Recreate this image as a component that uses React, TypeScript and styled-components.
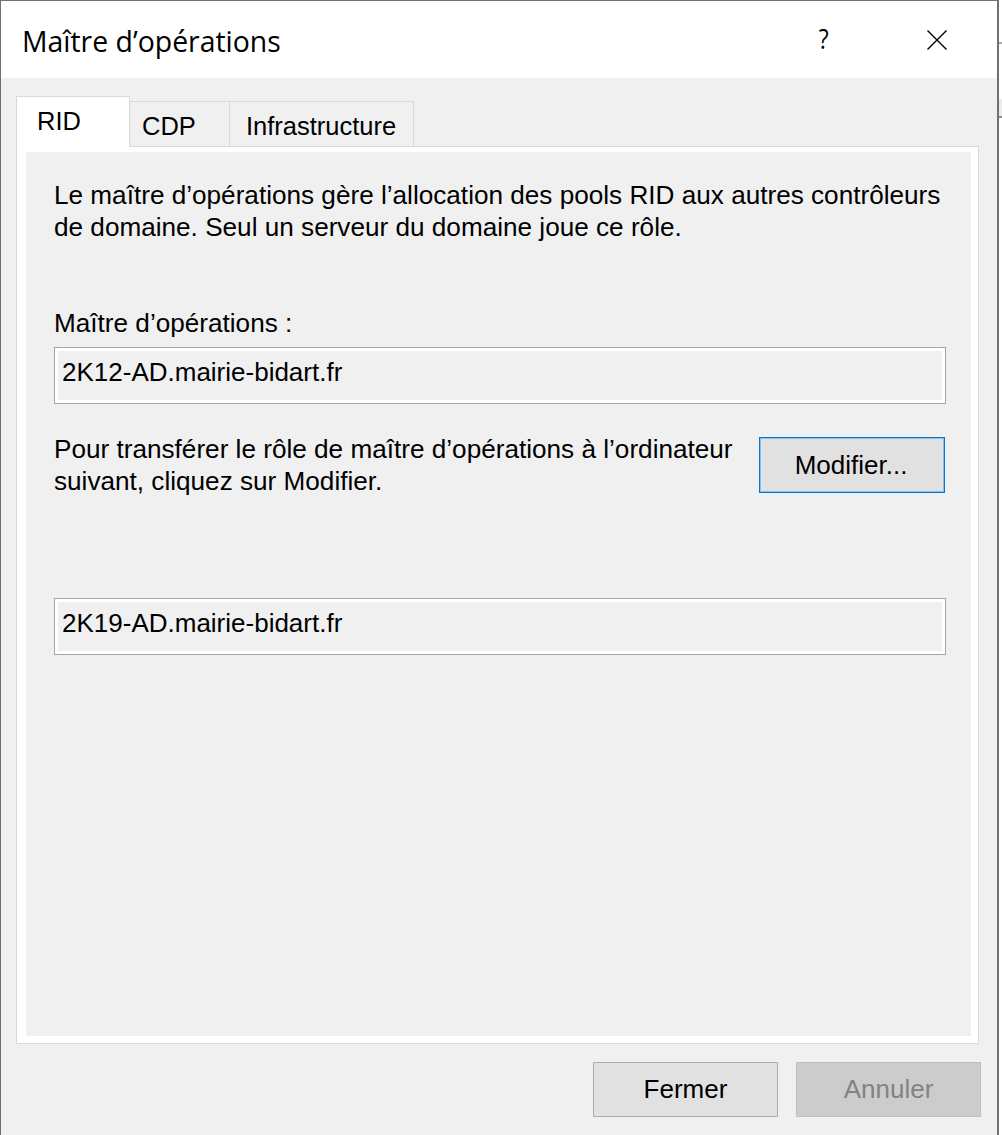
import React from "react";
import styled, { createGlobalStyle } from "styled-components";

const GlobalStyle = createGlobalStyle`
  html, body {
    margin: 0;
    padding: 0;
    background: #ffffff;
  }
  body {
    font-family: "Liberation Sans", Arial, sans-serif;
    color: #000;
  }
`;

type TabItem = { label: string; width: number; pad: number; active?: boolean };

const tabs: TabItem[] = [
  { label: "RID", width: 114, pad: 20, active: true },
  { label: "CDP", width: 100, pad: 12 },
  { label: "Infrastructure", width: 184, pad: 16 },
];

const App: React.FC = () => {
  return (
    <Desktop>
      <GlobalStyle />
      <Window>
        <TitleBar>
          <Title>Maître d’opérations</Title>
          <CaptionButton aria-label="Aide">
            <HelpGlyph>?</HelpGlyph>
          </CaptionButton>
          <CaptionButton aria-label="Fermer">
            <svg width="22" height="22" viewBox="0 0 22 22">
              <path d="M1.5 1.5 L20.5 20.5 M20.5 1.5 L1.5 20.5" stroke="#000" strokeWidth="1.4" fill="none" />
            </svg>
          </CaptionButton>
        </TitleBar>

        <Body>
          <TabStrip>
            {tabs.map((t) => (
              <Tab key={t.label} $active={!!t.active} $width={t.width} $pad={t.pad}>
                {t.label}
              </Tab>
            ))}
          </TabStrip>

          <Panel>
            <Page>
              <Text>
                Le maître d’opérations gère l’allocation des pools RID aux autres contrôleurs
                <br />
                de domaine. Seul un serveur du domaine joue ce rôle.
              </Text>

              <Label>Maître d’opérations :</Label>
              <ReadOnlyBox $top={8}>2K12-AD.mairie-bidart.fr</ReadOnlyBox>

              <TransferRow>
                <Text>
                  Pour transférer le rôle de maître d’opérations à l’ordinateur
                  <br />
                  suivant, cliquez sur Modifier.
                </Text>
                <ModifyButton>Modifier...</ModifyButton>
              </TransferRow>

              <ReadOnlyBox $top={101}>2K19-AD.mairie-bidart.fr</ReadOnlyBox>
            </Page>
          </Panel>

          <Footer>
            <DialogButton>Fermer</DialogButton>
            <DialogButton $disabled>Annuler</DialogButton>
          </Footer>
        </Body>
      </Window>

      <DesktopEdge>
        <EdgeGap $h={42} />
        <EdgeLine />
        <EdgeGap $h={55} />
        <EdgeBand />
      </DesktopEdge>
    </Desktop>
  );
};

export default App;

// styles

const Desktop = styled.div`
  display: flex;
  width: 1002px;
  height: 1135px;
  overflow: hidden;
  background: #ffffff;
`;

const Window = styled.div`
  flex: 0 0 999px;
  box-sizing: border-box;
  height: 1160px;
  display: flex;
  flex-direction: column;
  border-top: 1px solid #707070;
  border-left: 1px solid #707070;
  border-right: 2px solid #707070;
  background: #f0f0f0;
`;

const TitleBar = styled.div`
  height: 77px;
  display: flex;
  align-items: center;
  background: #ffffff;
  padding-right: 3px;
`;

const Title = styled.div`
  flex: 1;
  padding-left: 21px;
  padding-top: 3px;
  font-family: "Open Sans", "Noto Sans", sans-serif;
  font-size: 28.4px;
  color: #000;
  white-space: nowrap;
`;

const CaptionButton = styled.div`
  width: 114px;
  height: 77px;
  display: flex;
  align-items: center;
  justify-content: center;
`;

const HelpGlyph = styled.span`
  font-family: "Open Sans", "Noto Sans", sans-serif;
  font-size: 27px;
  line-height: 1;
  margin-top: -2px;
  margin-left: 2px;
  transform: scaleX(0.85);
`;

const Body = styled.div`
  flex: 1;
  display: flex;
  flex-direction: column;
  padding: 18px 17px 0 15px;
`;

const TabStrip = styled.div`
  height: 50px;
  display: flex;
  align-items: flex-end;
`;

const Tab = styled.div<{ $active: boolean; $width: number; $pad: number }>`
  box-sizing: border-box;
  position: relative;
  z-index: 1;
  width: ${(p) => p.$width}px;
  height: ${(p) => (p.$active ? 51 : 45)}px;
  margin-bottom: ${(p) => (p.$active ? -1 : 0)}px;
  padding-left: ${(p) => p.$pad}px;
  padding-top: ${(p) => (p.$active ? 9 : 9)}px;
  background: ${(p) => (p.$active ? "#ffffff" : "#f0f0f0")};
  border: 1px solid #d9d9d9;
  border-bottom: none;
  border-left: ${(p) => (p.$active ? "1px solid #d9d9d9" : "none")};
  font-size: 25.5px;
  line-height: 30px;
  white-space: nowrap;
`;

const Panel = styled.div`
  box-sizing: border-box;
  width: 963px;
  height: 898px;
  display: flex;
  flex-direction: column;
  padding: 5px 7px 7px 9px;
  background: #ffffff;
  border: 1px solid #d9d9d9;
`;

const Page = styled.div`
  flex: 1;
  display: flex;
  flex-direction: column;
  align-items: stretch;
  padding: 27px 25px 0 28px;
  background: #f0f0f0;
`;

const Text = styled.p`
  margin: 0;
  font-size: 26.15px;
  line-height: 32px;
  white-space: nowrap;
`;

const Label = styled(Text)`
  margin-top: 64px;
`;

const ReadOnlyBox = styled.div<{ $top: number }>`
  box-sizing: border-box;
  height: 57px;
  margin-top: ${(p) => p.$top}px;
  padding: 9px 8px 0 7px;
  background: #f0f0f0;
  border: 1px solid #a5a5a5;
  box-shadow: inset 0 0 0 3px #ffffff;
  font-size: 26px;
  line-height: 30px;
  white-space: nowrap;
`;

const TransferRow = styled.div`
  display: flex;
  justify-content: space-between;
  align-items: flex-start;
  margin-top: 29px;
  padding-right: 1px;
`;

const ModifyButton = styled.div`
  box-sizing: border-box;
  width: 186px;
  height: 56px;
  margin-top: 4px;
  display: flex;
  align-items: center;
  justify-content: center;
  padding-right: 2px;
  background: #e1e1e1;
  border: 1px solid #0078d7;
  box-shadow: inset 0 0 0 1px rgba(0, 120, 215, 0.35);
  font-size: 26px;
`;

const Footer = styled.div`
  display: flex;
  justify-content: flex-end;
  gap: 18px;
  padding-top: 18px;
  margin-right: -1px;
`;

const DialogButton = styled.div<{ $disabled?: boolean }>`
  box-sizing: border-box;
  width: 185px;
  height: 55px;
  display: flex;
  align-items: center;
  justify-content: center;
  background: ${(p) => (p.$disabled ? "#cccccc" : "#e1e1e1")};
  border: 1px solid ${(p) => (p.$disabled ? "#bfbfbf" : "#adadad")};
  color: ${(p) => (p.$disabled ? "#838383" : "#000000")};
  font-size: 26px;
`;

const DesktopEdge = styled.div`
  flex: 1;
  display: flex;
  flex-direction: column;
  background: #ffffff;
`;

const EdgeGap = styled.div<{ $h: number }>`
  height: ${(p) => p.$h}px;
`;

const EdgeLine = styled.div`
  height: 2px;
  background: #a9a9a9;
`;

const EdgeBand = styled.div`
  height: 17px;
  background: #ececec;
  border-bottom: 2px solid #8f8f8f;
`;
